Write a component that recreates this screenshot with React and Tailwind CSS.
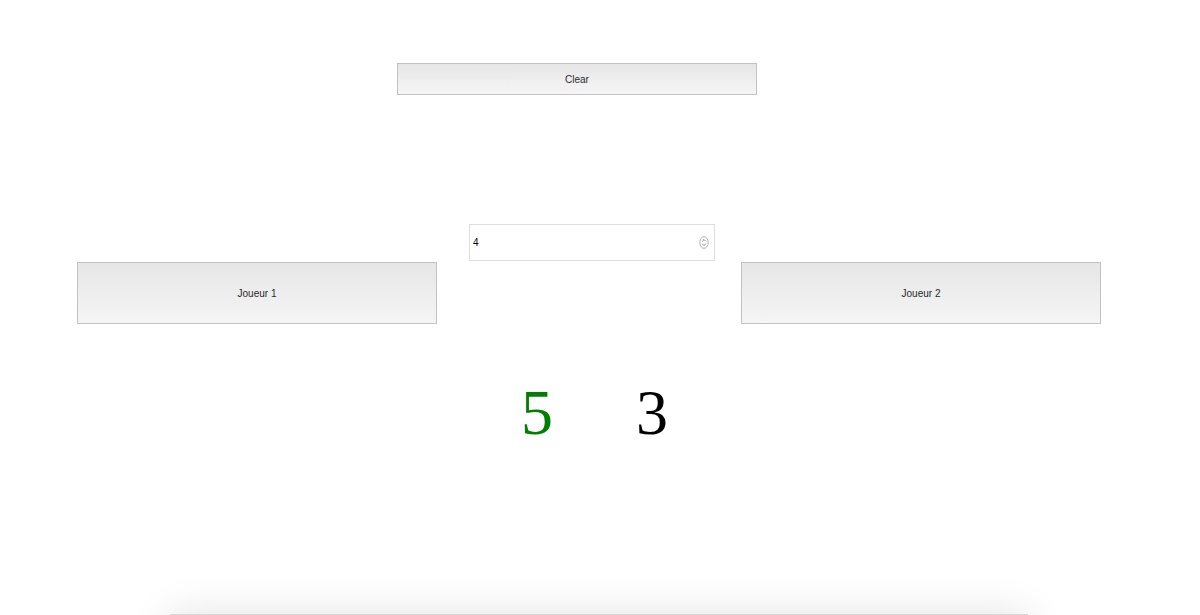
import { useState } from 'react'

function GrayButton({ label, className, onClick }) {
  return (
    <button
      onClick={onClick}
      className={`border border-[#c2c2c2] bg-gradient-to-b from-[#e6e6e6] to-[#f5f5f5] text-[10px] text-[#2a2a2a] ${className}`}
    >
      {label}
    </button>
  )
}

export default function App() {
  const [target, setTarget] = useState(4)
  const [scores, setScores] = useState([5, 3])

  return (
    <div className="h-[615px] overflow-hidden bg-white font-['Liberation_Sans',Arial,sans-serif]">
      <div className="pt-[63px] pl-[397px]">
        <GrayButton label="Clear" className="w-[360px] h-[32px]" onClick={() => setScores([0, 0])} />
      </div>

      <div className="mt-[129px] flex items-start pl-[77px]">
        <GrayButton
          label="Joueur 1"
          className="mt-[38px] w-[360px] h-[62px]"
          onClick={() => setScores([scores[0] + 1, scores[1]])}
        />
        <div className="ml-[32px] w-[246px] h-[37px] border border-[#dedede] flex items-center justify-between pl-[3px] pr-[5px]">
          <span className="text-[10px] text-black">{target}</span>
          <svg width="10" height="13" viewBox="0 0 10 13" onClick={() => setTarget(target + 1)}>
            <ellipse cx="5" cy="6.5" rx="4.2" ry="5.8" fill="white" stroke="#9a9a9a" strokeWidth="0.8" />
            <path d="M3.3 5.2 L5 3.5 L6.7 5.2" fill="none" stroke="#666" strokeWidth="0.8" />
            <path d="M3.3 7.8 L5 9.5 L6.7 7.8" fill="none" stroke="#666" strokeWidth="0.8" />
          </svg>
        </div>
        <GrayButton
          label="Joueur 2"
          className="ml-[26px] mt-[38px] w-[360px] h-[62px]"
          onClick={() => setScores([scores[0], scores[1] + 1])}
        />
      </div>

      <div className="mt-[57px] flex pl-[521px] font-['Liberation_Serif',serif] text-[64px] leading-none">
        <span className={scores[0] > scores[1] ? 'text-[#008000]' : 'text-black'}>{scores[0]}</span>
        <span className={`ml-[83px] ${scores[1] > scores[0] ? 'text-[#008000]' : 'text-black'}`}>{scores[1]}</span>
      </div>

      <div className="mt-[169px] ml-[170px] w-[858px] h-[40px] border-t border-[#d8d8d8] bg-white shadow-[0_0_40px_rgba(0,0,0,0.12)]" />
    </div>
  )
}
